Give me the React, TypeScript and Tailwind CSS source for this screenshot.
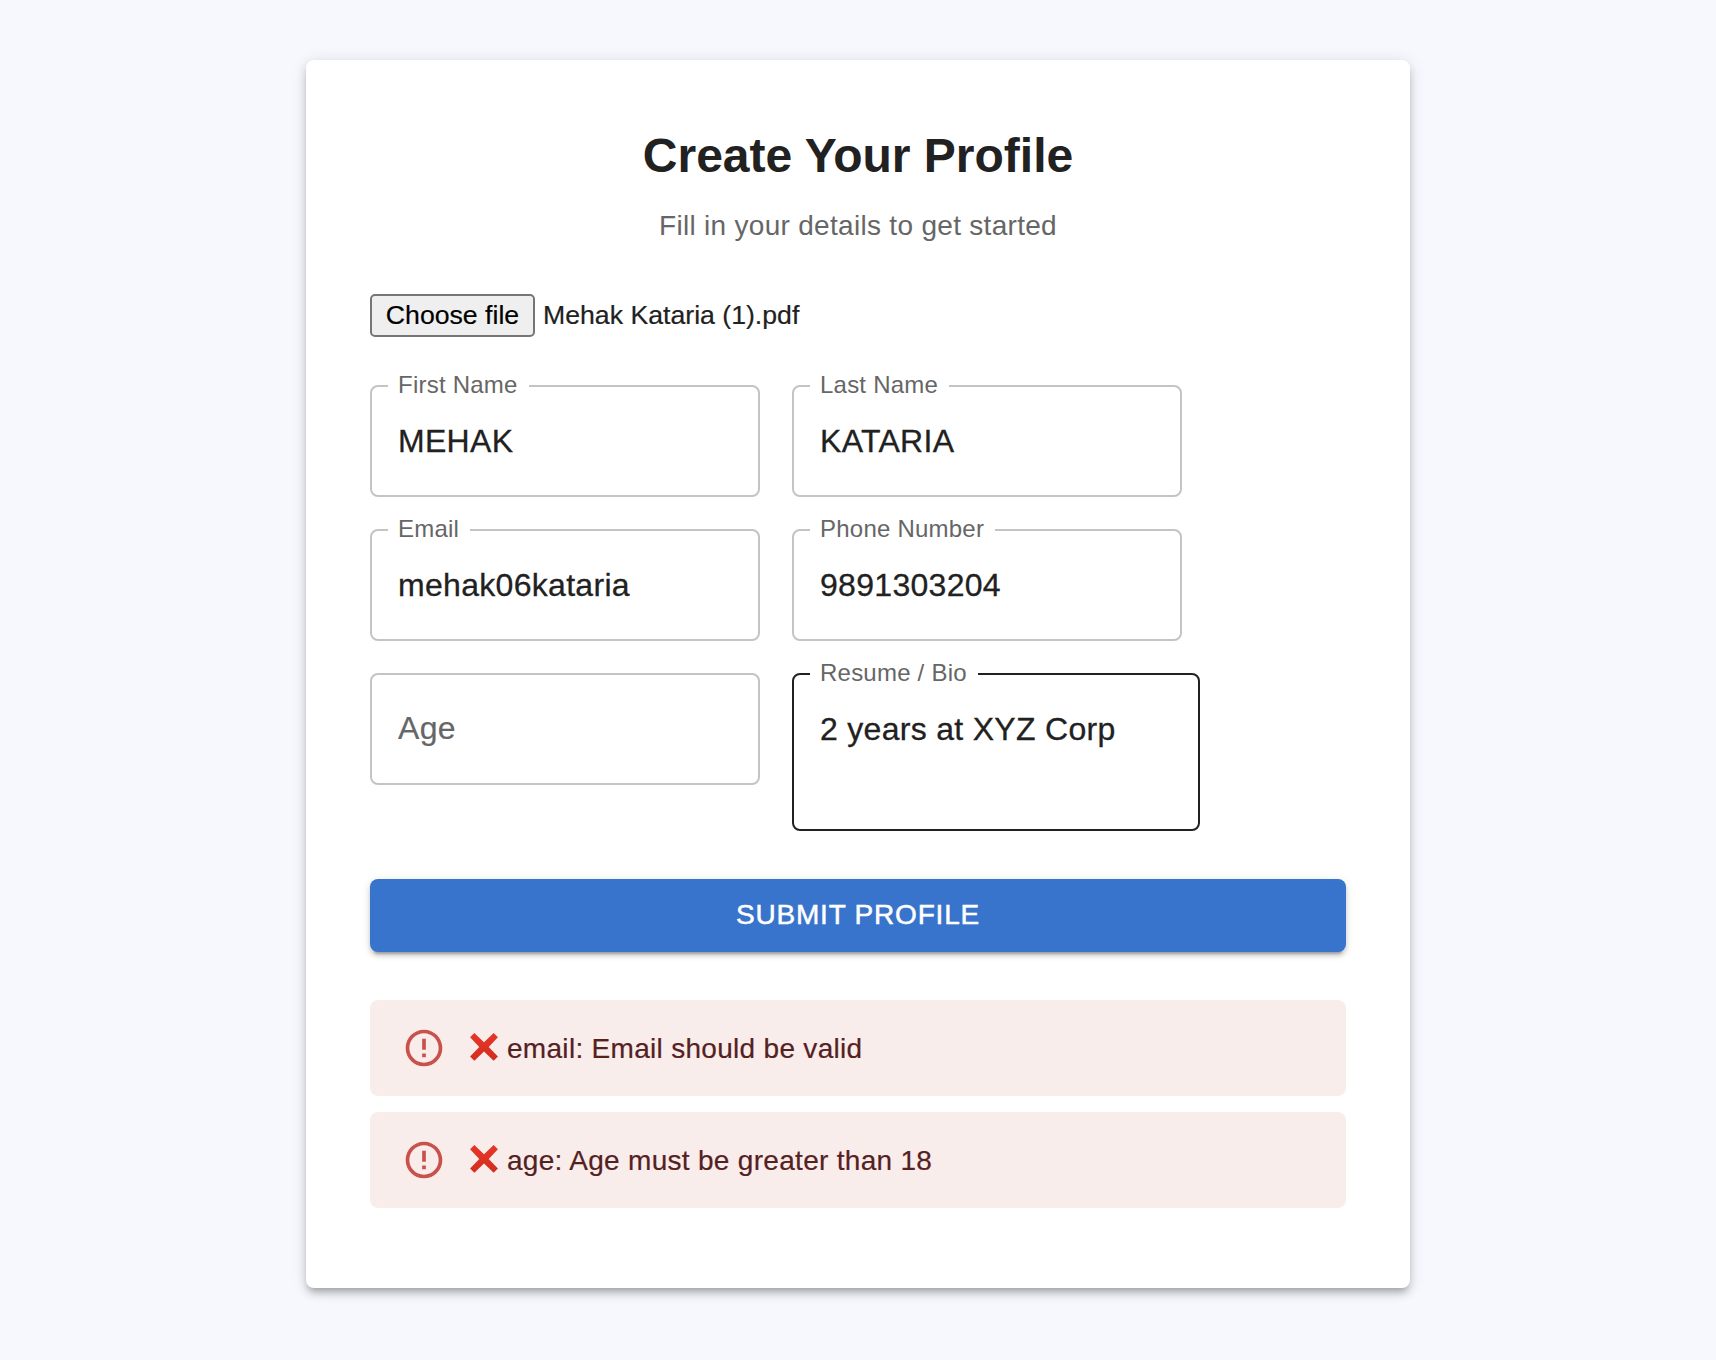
import type { ReactNode } from "react";

function Field({
  label,
  children,
  className = "w-[390px] h-[122px] border-[#c4c4c4]",
}: {
  label: string;
  children: ReactNode;
  className?: string;
}) {
  return (
    <fieldset className={`-mt-[10px] min-w-0 rounded-lg border-2 px-4 ${className}`}>
      <legend className="h-[22px] pr-[11px] pb-[2px] pl-[10px] text-2xl leading-[20px] tracking-[0.00938em] text-[#666666]">
        {label}
      </legend>
      {children}
    </fieldset>
  );
}

function TextInput({ value }: { value: string }) {
  return (
    <input
      type="text"
      defaultValue={value}
      className="block h-[88px] w-full bg-transparent px-[10px] text-[32px] tracking-[0.00938em] text-[#212121] outline-none [-webkit-text-stroke:0.3px]"
    />
  );
}

function ErrorAlert({ message }: { message: string }) {
  return (
    <div role="alert" className="flex h-24 items-center rounded-lg bg-[#f9edec] px-8">
      <svg viewBox="0 0 24 24" className="mr-[23px] size-11 shrink-0 fill-[#ca504a]" aria-hidden="true">
        <path d="M11 15h2v2h-2zm0-8h2v6h-2zm.99-5C6.47 2 2 6.48 2 12s4.47 10 9.99 10C17.52 22 22 17.52 22 12S17.52 2 11.99 2zM12 20c-4.42 0-8-3.58-8-8s3.58-8 8-8 8 3.58 8 8-3.58 8-8 8z" />
      </svg>
      <svg viewBox="0 0 28 28" className="mr-2 mb-[2px] size-[30px] shrink-0" aria-hidden="true">
        <defs>
          <linearGradient id="cross" x1="0" y1="0" x2="0" y2="1">
            <stop offset="0" stopColor="#e5372a" />
            <stop offset="1" stopColor="#d42c1c" />
          </linearGradient>
        </defs>
        <path
          fill="url(#cross)"
          d="M5 1 14 9.6 23 1 27 5 18.4 14 27 22.8 23 26.8 14 18.2 5 26.8 1 22.8 9.6 14 1 5Z"
        />
      </svg>
      <p className="pt-[2px] text-[28px] leading-10 tracking-[0.01071em] text-[#55211f] [-webkit-text-stroke:0.2px]">
        {message}
      </p>
    </div>
  );
}

export default function App() {
  return (
    <main
      className="flex min-h-[1360px] items-start justify-center bg-[#f6f8fe] pt-[60px] text-[#212121]"
      style={{ fontFamily: '"Liberation Sans", Arial, Helvetica, sans-serif' }}
    >
      <section className="flex h-[1228px] w-[1104px] flex-col rounded-lg bg-white px-16 pt-16 shadow-[0_6px_6px_-4px_rgba(0,0,0,0.2),0_6px_8px_0_rgba(0,0,0,0.14),0_2px_16px_0_rgba(0,0,0,0.12)]">
        <h1 className="text-center text-5xl leading-[64px] font-bold">Create Your Profile</h1>
        <p className="mt-[18px] text-center text-[28px] leading-10 tracking-[0.01071em] text-[#666666]">
          Fill in your details to get started
        </p>

        <div className="mt-12 flex h-[43px] items-center gap-2 text-[26.667px]">
          <button
            type="button"
            className="h-[43px] w-[165px] rounded-[5px] border-2 border-[#767676] bg-[#efefef] pb-[2px] leading-[38px] text-black [-webkit-text-stroke:0.2px]"
          >
            Choose file
          </button>
          <span className="pb-[2px] leading-[38px] [-webkit-text-stroke:0.2px]">Mehak Kataria (1).pdf</span>
        </div>

        <form className="mt-12 flex flex-wrap items-start gap-8">
          <Field label="First Name">
            <TextInput value="MEHAK" />
          </Field>
          <Field label="Last Name">
            <TextInput value="KATARIA" />
          </Field>
          <div className="w-[100px]" />
          <Field label="Email">
            <TextInput value="mehak06kataria" />
          </Field>
          <Field label="Phone Number">
            <TextInput value="9891303204" />
          </Field>
          <div className="w-[100px]" />
          <fieldset className="h-28 w-[390px] min-w-0 rounded-lg border-2 border-[#c4c4c4] px-4">
            <input
              type="text"
              placeholder="Age"
              className="block h-[106px] w-full bg-transparent px-[10px] text-[32px] tracking-[0.00938em] outline-none placeholder:text-[#666666] [-webkit-text-stroke:0.2px]"
            />
          </fieldset>
          <Field label="Resume / Bio" className="h-[168px] w-[408px] border-[#212121]">
            <textarea
              defaultValue="2 years at XYZ Corp"
              className="block h-[120px] w-full resize-none bg-transparent px-[10px] pt-[21px] text-[32px] leading-[46px] tracking-[0.00938em] outline-none [-webkit-text-stroke:0.3px]"
            />
          </Field>
        </form>

        <button
          type="button"
          className="mt-12 h-[73px] shrink-0 rounded-lg bg-[#3873cc] pb-[1px] text-[28px] tracking-[0.02857em] text-white uppercase shadow-[0_6px_2px_-4px_rgba(0,0,0,0.2),0_4px_4px_0_rgba(0,0,0,0.14),0_2px_10px_0_rgba(0,0,0,0.12)] [-webkit-text-stroke:0.5px]"
        >
          Submit Profile
        </button>

        <div className="mt-12 flex flex-col gap-4">
          <ErrorAlert message="email: Email should be valid" />
          <ErrorAlert message="age: Age must be greater than 18" />
        </div>
      </section>
    </main>
  );
}
